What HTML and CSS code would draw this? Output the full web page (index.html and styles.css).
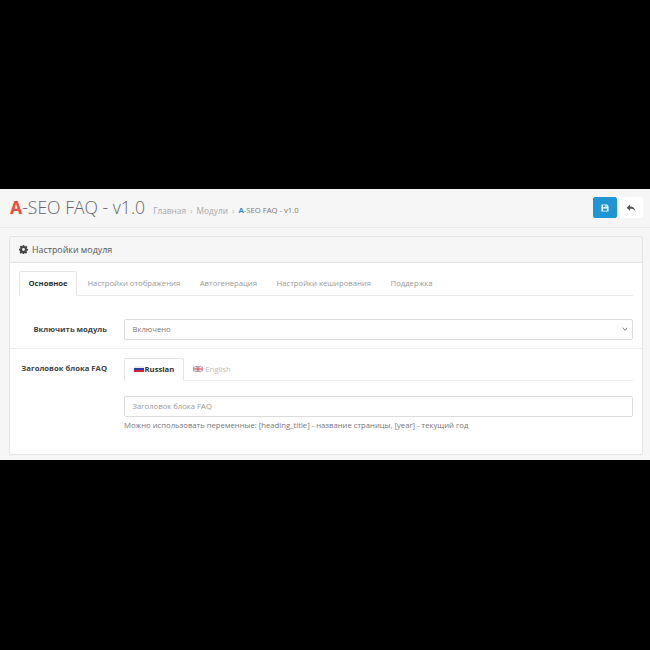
FILE: index.html
```html
<!DOCTYPE html>
<html lang="ru">
<head>
<meta charset="utf-8">
<title>A-SEO FAQ</title>
<link rel="stylesheet" href="styles.css">
</head>
<body>
<div class="band-top"></div>
<main class="page">
  <header class="page-header">
    <h1 class="title"><b>A</b>-SEO FAQ - v1.0</h1>
    <nav class="crumbs">
      <span>Главная</span><i>›</i><span>Модули</span><i>›</i><span class="current"><b>A</b>-SEO FAQ - v1.0</span>
    </nav>
    <div class="actions">
      <button class="btn btn-primary" aria-label="Сохранить">
        <svg viewBox="0 0 16 16" width="8" height="8"><path fill="#fff" fill-rule="evenodd" d="M1 1h11l3 3v11H1zM4 2.500v4h7v-4zM4 9v4.500h8V9zM8.500 3h1.500v3H8.500z"/></svg>
      </button>
      <button class="btn btn-default" aria-label="Назад">
        <svg viewBox="0 0 16 16" width="10" height="10"><path fill="#555" d="M6.500 2.500v3.200c5 0 8 2.200 8.500 7.800-1.500-3.300-4-4.200-8.500-4.200v3.200L1 7.500z"/></svg>
      </button>
    </div>
  </header>
  <section class="panel">
    <div class="panel-heading">
      <svg class="gear" viewBox="0 0 16 16" width="9" height="9"><path fill="#444" fill-rule="evenodd" d="M6.600 0h2.800l.4 2.200 1.300.6 1.900-1.300 2 2-1.300 1.900.6 1.300 1.700.4v2.800l-2.200.4-.6 1.300 1.300 1.900-2 2-1.900-1.300-1.300.6-.4 2.200H6.600l-.4-2.200-1.300-.6L3 15.500l-2-2 1.300-1.900-.6-1.300L0 9.900V6.600l2.200-.4.6-1.300L1.500 3l2-2 1.900 1.300 1.300-.6zM8 5.500a2.500 2.500 0 1 0 0 5 2.500 2.500 0 0 0 0-5z"/></svg>
      <span>Настройки модуля</span>
    </div>
    <div class="panel-body">
      <ul class="tabs">
        <li class="tab active">Основное</li>
        <li class="tab">Настройки отображения</li>
        <li class="tab">Автогенерация</li>
        <li class="tab">Настройки кеширования</li>
        <li class="tab">Поддержка</li>
      </ul>
      <div class="row row-first">
        <label class="row-label">Включить модуль</label>
        <div class="row-field">
          <div class="control select">
            <span>Включено</span>
            <svg viewBox="0 0 10 6" width="6" height="4"><path fill="none" stroke="#555" stroke-width="1.400" d="M1 1l4 4 4-4"/></svg>
          </div>
        </div>
      </div>
      <div class="row row-second">
        <label class="row-label">Заголовок блока FAQ</label>
        <div class="row-field">
          <ul class="tabs lang-tabs">
            <li class="tab active">
              <svg class="flag" viewBox="0 0 10 6" width="10" height="6"><rect width="10" height="2" fill="#eee"/><rect y="2" width="10" height="2" fill="#2a3fa8"/><rect y="4" width="10" height="2" fill="#d8213a"/></svg>
              Russian
            </li>
            <li class="tab">
              <svg class="flag" viewBox="0 0 10 6" width="10" height="6"><rect width="10" height="6" fill="#9aa3c4"/><path stroke="#f0e6e6" stroke-width="1.200" d="M0 0l10 6M10 0L0 6"/><path stroke="#f0e6e6" stroke-width="2" d="M5 0v6M0 3h10"/><path stroke="#d9404f" stroke-width="1" d="M5 0v6M0 3h10"/></svg>
              English
            </li>
          </ul>
          <div class="control input">Заголовок блока FAQ</div>
          <p class="help">Можно использовать переменные: [heading_title] - название страницы, [year] - текущий год</p>
        </div>
      </div>
    </div>
  </section>
</main>
<div class="band-bottom"></div>
</body>
</html>
```
FILE: styles.css
```css
* { box-sizing: border-box; }
html, body { margin: 0; padding: 0; height: 650px; overflow: hidden; background: #000; }
body { font-family: "Open Sans", "Liberation Sans", sans-serif; font-size: 7.700px; color: #666; display: flex; flex-direction: column; }
.band-top { height: 189px; background: #000; }
.band-bottom { flex: 1; background: #000; }
.page { height: 271px; background: #f6f6f6; }

.page-header { height: 39px; display: flex; align-items: center; padding: 0 7px 1px 10px; border-bottom: 1px solid #ebebeb; }
.title { margin: 0; font-size: 17.600px; font-weight: 300; color: #666; line-height: 1; white-space: nowrap; }
.title b { color: #e8503a; font-weight: 700; }
.crumbs { margin: 5px 0 0 8px; display: flex; align-items: center; font-size: 8.300px; color: #aaa; white-space: nowrap; }
.crumbs i { font-style: normal; margin: 0 4px; color: #bbb; }
.crumbs .current { color: #777; font-size: 7.700px; font-weight: 400; }
.crumbs .current b { color: #2a8fd0; font-weight: 700; }
.actions { margin-left: auto; display: flex; gap: 2px; }
.btn { width: 24px; height: 21px; padding: 0; display: flex; align-items: center; justify-content: center; border: 1px solid #fff; border-radius: 2px; background: #fff; }
.btn-primary { background: #1f95d3; border-color: #1f95d3; }

.panel { margin: 8px 7px 0 9px; height: 219px; background: #fff; border: 1px solid #e4e4e4; border-radius: 2px; }
.panel-heading { height: 26px; padding: 0 9px; display: flex; align-items: center; gap: 4px; background: #f6f6f6; border-bottom: 1px solid #e4e4e4; font-size: 8.900px; color: #555; }
.panel-body { padding: 8px 9px 0; }

.tabs { list-style: none; margin: 0; padding: 0; display: flex; border-bottom: 1px solid #ebebeb; height: 25px; }
.tab { padding: 0 9.800px 1px; height: 25px; display: flex; align-items: center; font-size: 7.700px; color: #999; white-space: nowrap; }
.tab.active { padding: 0 8.500px 1px; background: #fff; color: #333; font-weight: 700; border: 1px solid #e4e4e4; border-bottom: 1px solid #fff; border-radius: 2px 2px 0 0; }
.tab.active + .tab { margin-left: 0.500px; }

.row { display: flex; margin: 0 -9px; padding: 0 9px; }
.row-first { padding-top: 23px; padding-bottom: 8px; border-bottom: 1px solid #ededed; }
.row-second { padding-top: 9px; }
.row-label { width: 88px; flex: none; text-align: right; font-weight: 700; font-size: 7.700px; color: #444; line-height: 21px; }
.row-second .row-label { line-height: 20px; }
.row-field { flex: 1; margin-left: 17px; min-width: 0; }

.control { height: 21px; border: 1px solid #dcdcdc; border-radius: 2px; background: #fff; padding: 0 7.500px 1px; display: flex; align-items: center; justify-content: space-between; font-size: 7.700px; color: #777; }
.select svg { margin-right: -3px; }
.input { margin-top: 15px; color: #999; }

.lang-tabs { height: 23px; }
.lang-tabs .tab { height: 23px; padding: 0 9.500px 1px; gap: 2px; }
.lang-tabs .tab.active { padding: 0 8.500px 1px 8.500px; gap: 1px; }
.lang-tabs .tab.active + .tab { margin-left: 0; }
.lang-tabs .tab + .tab { color: #bbb; }
.flag { flex: none; }
.help { margin: 3px 0 0; font-size: 7.700px; color: #777; white-space: nowrap; }
```
